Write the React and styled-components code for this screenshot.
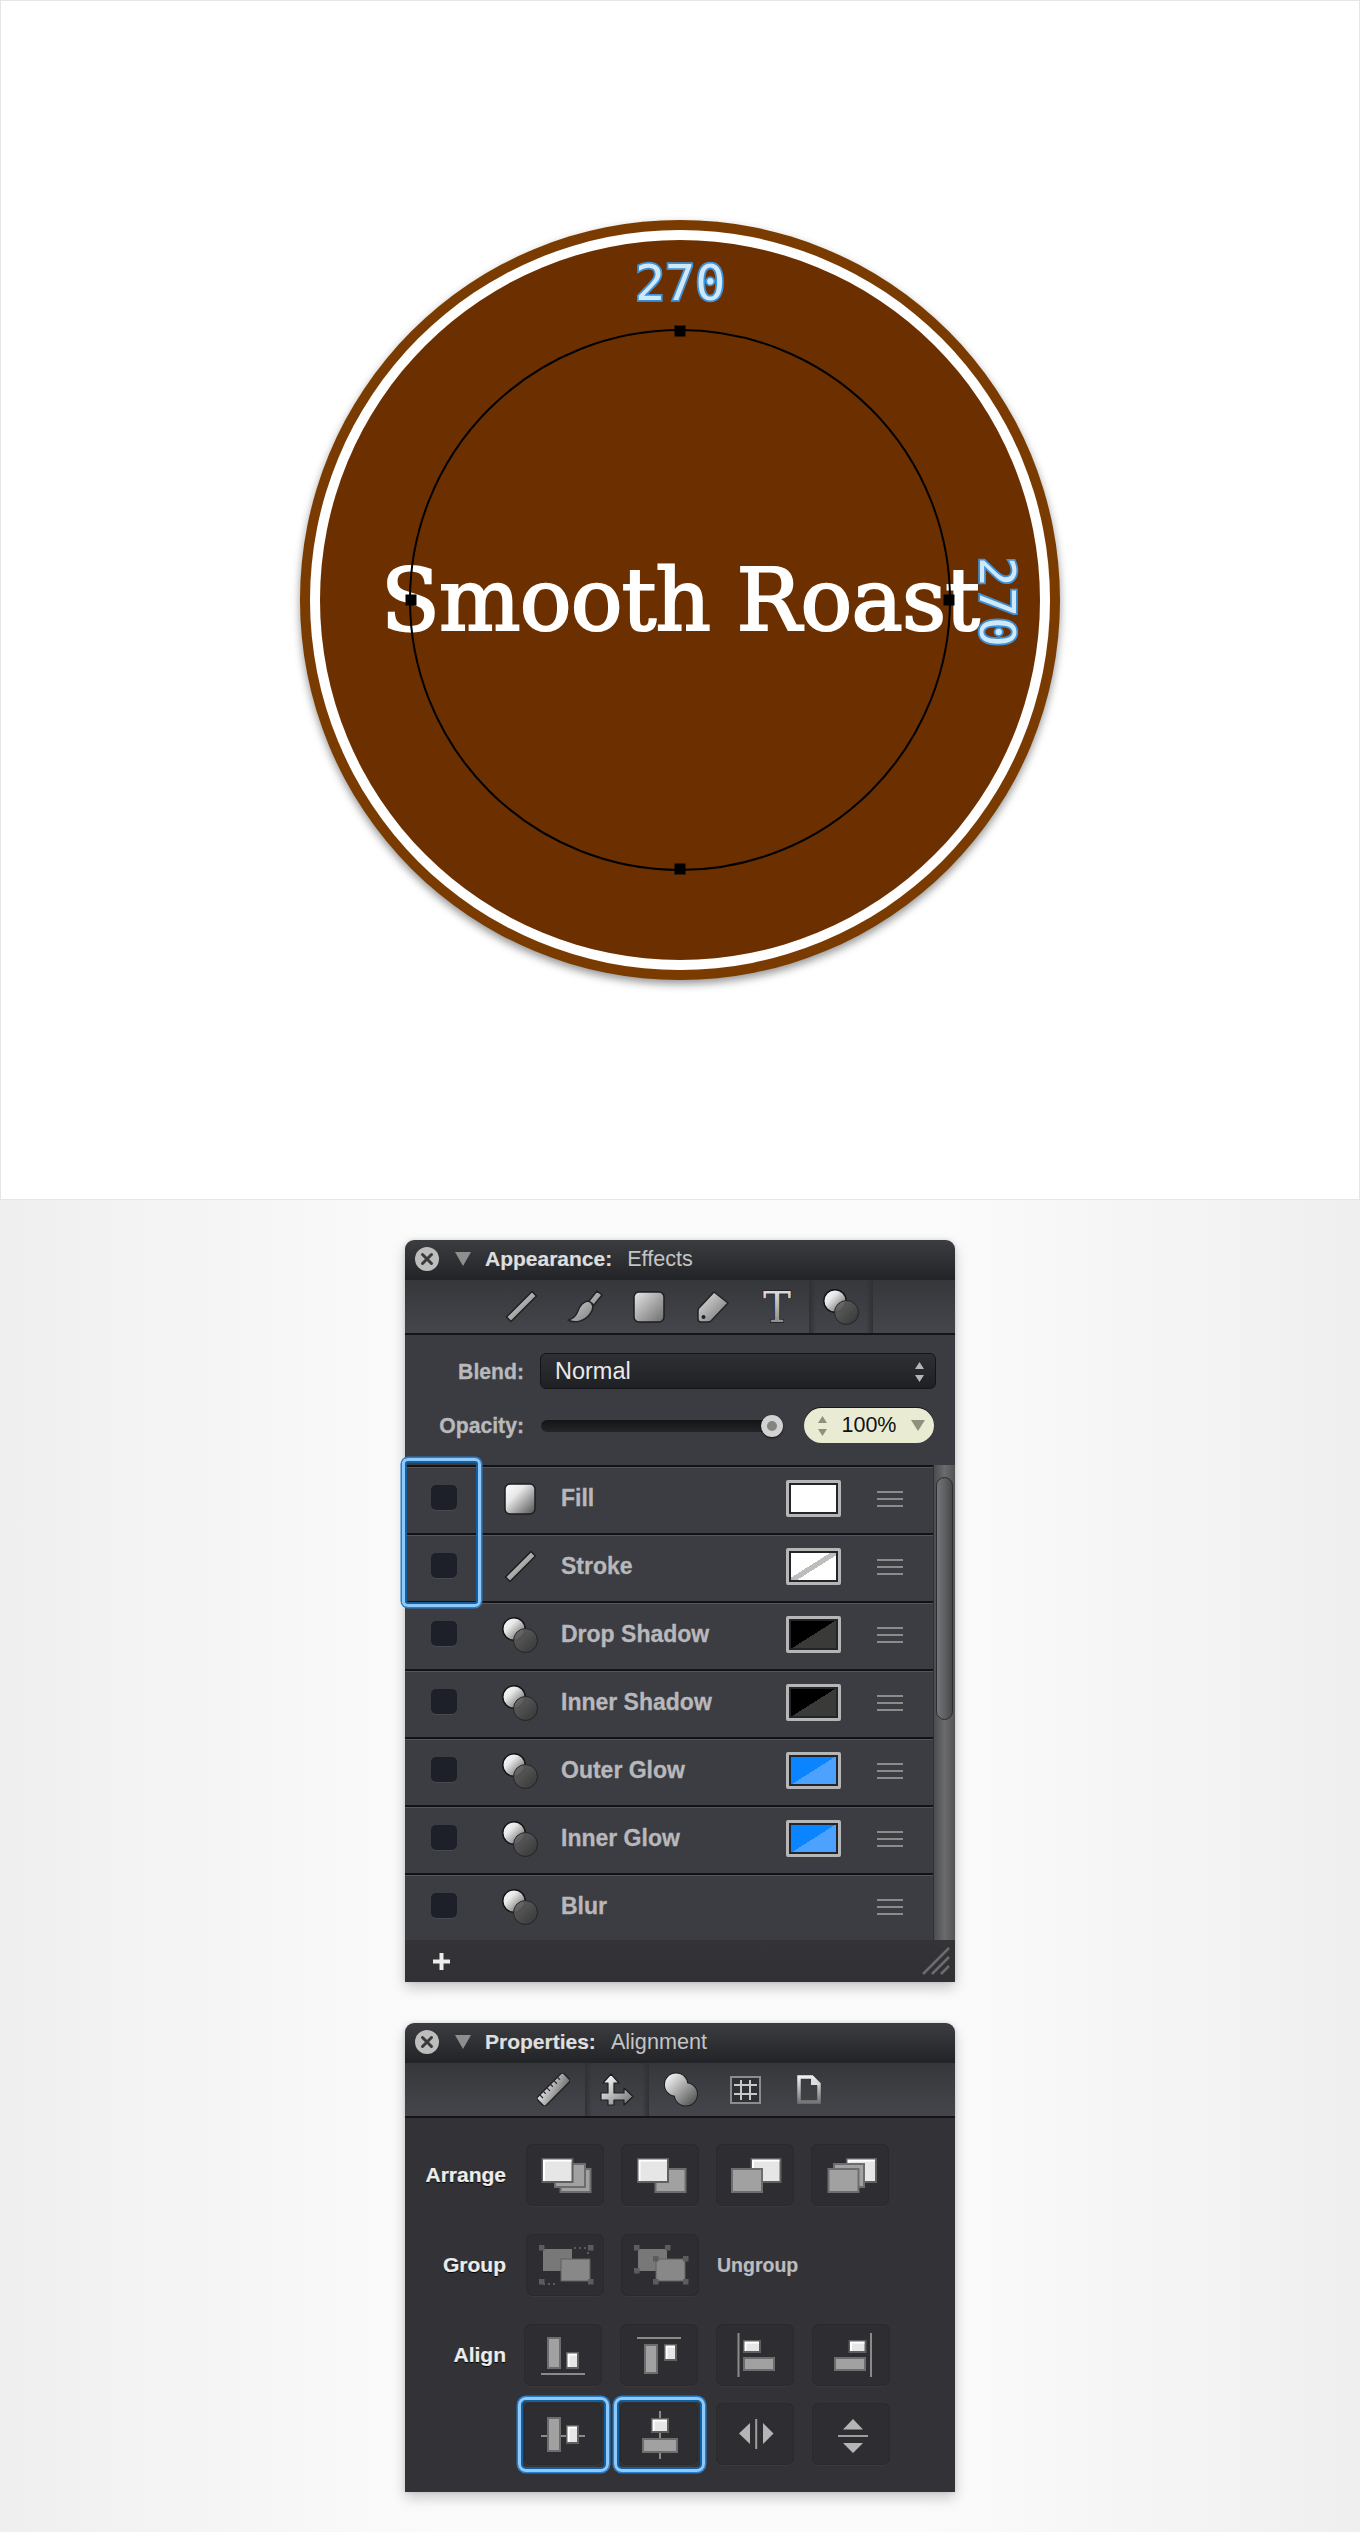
import React from 'react'
import styled, { createGlobalStyle } from 'styled-components'

const GlobalStyle = createGlobalStyle`
  html, body {
    margin: 0;
    padding: 0;
    background: #f4f4f4;
  }
  body {
    font-family: "Liberation Sans", Arial, sans-serif;
  }
`

const Page = styled.div`
  width: 1360px;
  height: 2532px;
  overflow: hidden;
`

/* ---------- artboard with the badge ---------- */

const Artboard = styled.section`
  box-sizing: border-box;
  height: 1200px;
  background: #fff;
  border: 1px solid #e6e6e6;
  display: flex;
  align-items: center;
  justify-content: center;
`

const BadgeOuter = styled.div`
  width: 760px;
  height: 760px;
  border-radius: 50%;
  background: #7a3b00;
  box-shadow: 0 4px 8px rgba(0, 0, 0, 0.42);
  display: flex;
  align-items: center;
  justify-content: center;
`

const BadgeRing = styled.div`
  width: 740px;
  height: 740px;
  border-radius: 50%;
  background: #fff;
  display: flex;
  align-items: center;
  justify-content: center;
`

const BadgeInner = styled.div`
  position: relative;
  width: 720px;
  height: 720px;
  border-radius: 50%;
  background: #6c3000;
  display: flex;
  align-items: center;
  justify-content: center;
`

const BadgeTitle = styled.div`
  font-family: "DejaVu Serif", "Liberation Serif", serif;
  font-size: 86px;
  line-height: 1;
  letter-spacing: -0.8px;
  color: #fff;
  white-space: nowrap;
  -webkit-text-stroke: 2.2px #fff;
`

const Guide = styled.div`
  position: absolute;
  box-sizing: border-box;
  left: 89px;
  top: 89px;
  width: 542px;
  height: 542px;
  border: 2px solid #000;
  border-radius: 50%;
`

const handlePlace = {
  top: 'left: 50%; top: 0;',
  bottom: 'left: 50%; top: 100%;',
  left: 'left: 0; top: 50%;',
  right: 'left: 100%; top: 50%;',
}

const Handle = styled.i`
  position: absolute;
  width: 11px;
  height: 11px;
  background: #000;
  transform: translate(-50%, -50%);
  ${(p) => handlePlace[p.$side]}
`

const PathLabel = styled.span`
  position: absolute;
  font-family: "DejaVu Sans Mono", "Liberation Mono", monospace;
  font-size: 50px;
  line-height: 56px;
  color: #cfe9fc;
  -webkit-text-stroke: 3.5px #3f94dc;
  paint-order: stroke fill;
  text-shadow: 0 0 1px #1f6ab0;
`

const TopLabel = styled(PathLabel)`
  left: 315px;
  top: 15px;
`

const SideLabel = styled(PathLabel)`
  left: 632px;
  top: 334px;
  transform: rotate(90deg);
`

/* ---------- workspace with the panels ---------- */

const Workspace = styled.section`
  height: 1332px;
  padding-top: 40px;
  box-sizing: border-box;
  background: linear-gradient(90deg, #efefef 0%, #fbfbfb 32%, #fbfbfb 68%, #efefef 100%);
  display: flex;
  flex-direction: column;
  align-items: center;
  gap: 41px;
`

const Panel = styled.div`
  position: relative;
  width: 550px;
  border-radius: 9px 9px 0 0;
  box-shadow: 0 6px 14px rgba(0, 0, 0, 0.2), 0 0 4px rgba(0, 0, 0, 0.12);
`

const TitleBar = styled.header`
  height: 40px;
  box-sizing: border-box;
  padding: 0 0 2px 10px;
  border-radius: 9px 9px 0 0;
  background: linear-gradient(#3c3d41, #222326);
  display: flex;
  align-items: center;
  font-size: 21.6px;
  color: #c4c4c4;
`

const CloseIcon = styled.svg`
  width: 24px;
  height: 24px;
  margin-right: 16px;
`

const Disclosure = styled.i`
  width: 0;
  height: 0;
  margin-right: 14px;
  border-left: 8.5px solid transparent;
  border-right: 8.5px solid transparent;
  border-top: 14px solid #8e8e8e;
`

const PanelName = styled.strong`
  font-size: 21px;
  color: #dedede;
  margin-right: 15px;
  -webkit-text-stroke: 0.2px #dedede;
`

const Toolbar = styled.nav`
  height: 55px;
  box-sizing: border-box;
  padding-left: 2px;
  border-bottom: 2px solid #141517;
  background: linear-gradient(#36373b, #45464b);
  display: flex;
  justify-content: center;
`

const Tab = styled.div`
  width: 64px;
  display: flex;
  align-items: center;
  justify-content: center;
  ${(p) =>
    p.$active &&
    `background: linear-gradient(90deg, #303134 0, rgba(60, 61, 66, 0.2) 7px, rgba(60, 61, 66, 0.2) 57px, #303134 64px);`}
`

const EffectsForm = styled.div`
  background: #3b3c41;
  padding: 18px 19px 22px 0;
  display: flex;
  flex-direction: column;
  gap: 19px;
`

const FormRow = styled.div`
  display: flex;
  align-items: center;
  gap: 16px;
`

const FormLabel = styled.label`
  width: 119px;
  padding-top: 1px;
  text-align: right;
  font-size: 21.2px;
  font-weight: bold;
  color: #b9b9bb;
  -webkit-text-stroke: 0.3px #b9b9bb;
`

const Select = styled.div`
  flex: 1;
  height: 36px;
  box-sizing: border-box;
  padding: 1px 11px 0 14px;
  border: 1px solid #131417;
  border-radius: 6px;
  background: linear-gradient(#2f3034, #1f2023);
  display: flex;
  align-items: center;
  justify-content: space-between;
  font-size: 23.5px;
  color: #e9e9e9;
`

const Stepper = styled.svg`
  width: 9px;
  height: 20px;
`

const OpacityControls = styled.div`
  flex: 1;
  display: flex;
  align-items: center;
  gap: 21px;
  margin-right: 2px;
`

const SliderTrack = styled.div`
  position: relative;
  width: 242px;
  height: 12px;
  margin-left: 1px;
  border-radius: 6px;
  background: linear-gradient(#131416, #242528);
`

const SliderKnob = styled.i`
  position: absolute;
  right: 0;
  top: -5px;
  width: 22px;
  height: 22px;
  box-sizing: border-box;
  border: 6px solid #d2d2d2;
  border-radius: 50%;
  background: #85857f;
  box-shadow: 0 1px 2px rgba(0, 0, 0, 0.7);
`

const OpacityField = styled.div`
  width: 130px;
  height: 35px;
  box-sizing: border-box;
  padding: 0 9px 0 14px;
  border-radius: 18px;
  background: #e9ecd3;
  box-shadow: 0 -1px 0 #17181a;
  display: flex;
  align-items: center;
  justify-content: space-between;
  font-size: 21.5px;
  color: #111;
`

const LayerArea = styled.div`
  height: 475px;
  display: flex;
  overflow: hidden;
  background: #3c3d42;
`

const LayerList = styled.ul`
  list-style: none;
  margin: 0;
  padding: 0;
  width: 528px;
`

const LayerRow = styled.li`
  height: 68px;
  box-sizing: border-box;
  border-top: 2px solid #121315;
  box-shadow: inset 0 1px 0 #54555a;
  padding: 0 0 3px 26px;
  display: flex;
  align-items: center;
`

const Checkbox = styled.i`
  width: 26px;
  height: 25px;
  margin: -2px 45px 0 0;
  border-radius: 5px;
  background: #1d2029;
  box-shadow: 0 1px 0 #494a4f;
`

const LayerIconBox = styled.div`
  width: 36px;
  height: 36px;
  margin-right: 23px;
  display: flex;
  align-items: center;
  justify-content: center;
`

const LayerName = styled.span`
  flex: 1;
  font-size: 23px;
  font-weight: bold;
  color: #b8b8bc;
  -webkit-text-stroke: 0.3px #b8b8bc;
`

const Swatch = styled.i`
  width: 55px;
  height: 37px;
  box-sizing: border-box;
  border: 3px solid #b6b6b6;
  border-radius: 2px;
  background: ${(p) => p.$fill};
  box-shadow: inset 0 0 0 2px #24252a;
  margin-right: 36px;
`

const GripLines = styled.i`
  width: 26px;
  height: 16px;
  margin-right: 30px;
  background: repeating-linear-gradient(#8b8b8b 0, #8b8b8b 2px, transparent 2px, transparent 7px);
`

const Scrollbar = styled.div`
  width: 22px;
  background: linear-gradient(90deg, #4b4c4f, #6b6b6c 50%, #525356);
  border-left: 1px solid #2e2f32;
  box-sizing: border-box;
  padding: 12px 2px 0 2px;
`

const ScrollThumb = styled.div`
  height: 241px;
  border-radius: 9px;
  border: 1px solid #2b2c2f;
  background: linear-gradient(90deg, #74757a, #5b5c5e 60%, #47484a);
`

const SelectionBox = styled.div`
  position: absolute;
  left: -3px;
  top: 218px;
  width: 79px;
  height: 149px;
  box-sizing: border-box;
  border: 3px solid #8dc9fa;
  border-radius: 6px;
  box-shadow: 0 0 0 1.5px #2a7cc9, inset 0 0 0 2px #14609f;
  pointer-events: none;
`

const PanelFooter = styled.footer`
  height: 42px;
  box-sizing: border-box;
  padding: 0 5px 0 28px;
  background: linear-gradient(#343438, #313135);
  display: flex;
  align-items: center;
  justify-content: space-between;
`

const PropertiesBody = styled.div`
  background: #333337;
  padding: 26px 0 27px 0;
  display: flex;
  flex-direction: column;
`

const ButtonRow = styled.div`
  display: flex;
  align-items: center;
  margin-top: ${(p) => p.$top || 0}px;
`

const RowLabel = styled.span`
  width: 101px;
  text-align: right;
  margin-right: ${(p) => p.$gap}px;
  font-size: 21px;
  font-weight: bold;
  color: #ececec;
  text-shadow: 0 1px 1px #000;
  -webkit-text-stroke: 0.2px #ececec;
`

const ButtonGroup = styled.div`
  display: flex;
  gap: ${(p) => p.$gap}px;
`

const IconButton = styled.div`
  position: relative;
  width: 78px;
  height: 62px;
  border-radius: 7px;
  background: #2e2e32;
  box-shadow: inset 0 0 0 1px #2a2a2d, 0 1px 0 #3a3a3e;
  ${(p) =>
    p.$selected &&
    `&::after {
      content: '';
      position: absolute;
      inset: -6px -7px -7px -6px;
      border: 3.5px solid #8dc9fa;
      border-radius: 8px;
      box-shadow: 0 0 0 1.5px #2a7cc9, inset 0 0 0 2px #14609f;
    }`}
`

const UngroupText = styled.span`
  margin-left: 18px;
  font-size: 19.5px;
  font-weight: bold;
  color: #bcbcc0;
  -webkit-text-stroke: 0.2px #bcbcc0;
`

const DefsHolder = styled.svg`
  display: block;
  width: 0;
  height: 0;
`

/* ---------- drawings ---------- */

const Defs = () => (
  <DefsHolder>
    <defs>
      <linearGradient id="metal" x1="0" y1="0" x2="1" y2="1">
        <stop offset="0" stopColor="#e6e6e6" />
        <stop offset="1" stopColor="#6d6d6d" />
      </linearGradient>
      <linearGradient id="gloss" x1="0" y1="0" x2="1" y2="1">
        <stop offset="0" stopColor="#ffffff" />
        <stop offset="0.35" stopColor="#e8e8e8" />
        <stop offset="1" stopColor="#4e4e4e" />
      </linearGradient>
      <linearGradient id="vert" x1="0" y1="0" x2="0" y2="1">
        <stop offset="0" stopColor="#efefef" />
        <stop offset="1" stopColor="#777" />
      </linearGradient>
      <linearGradient id="blob" gradientUnits="userSpaceOnUse" x1="4" y1="4" x2="32" y2="32">
        <stop offset="0" stopColor="#f4f4f4" />
        <stop offset="1" stopColor="#555" />
      </linearGradient>
      <linearGradient id="arrows" gradientUnits="userSpaceOnUse" x1="5" y1="2" x2="30" y2="30">
        <stop offset="0" stopColor="#fff" />
        <stop offset="1" stopColor="#777" />
      </linearGradient>
      <linearGradient id="smoke" x1="0" y1="0" x2="1" y2="1">
        <stop offset="0" stopColor="#6a6a6a" stopOpacity="0.85" />
        <stop offset="1" stopColor="#333" stopOpacity="0.95" />
      </linearGradient>
    </defs>
  </DefsHolder>
)

const Close = () => (
  <CloseIcon viewBox="0 0 24 24">
    <circle cx="12" cy="12" r="12" fill="#bdbdbd" />
    <path d="M7.5 7.5l9 9M16.5 7.5l-9 9" stroke="#3a3a3c" strokeWidth="3" strokeLinecap="round" />
  </CloseIcon>
)

const UpDown = ({ color = '#b5b5b5' }) => (
  <Stepper viewBox="0 0 9 20">
    <path d="M4.5 0L9 7H0z M0 13h9L4.5 20z" fill={color} />
  </Stepper>
)

const LineIcon = () => (
  <svg width="33" height="33" viewBox="0 0 33 33">
    <path d="M1.5 27L27 1.5l4.5 4.5L6 31.5z" fill="url(#metal)" stroke="#1d1e21" strokeWidth="1.5" strokeLinejoin="round" />
  </svg>
)

const BrushIcon = () => (
  <svg width="36" height="33" viewBox="0 0 36 33">
    <path
      d="M30 1l5 4-8 10-5-4zM21 11c6 2 6 8 2 13-5 7-15 10-22 6 5-1 8-4 10-9 2-6 5-9 10-10z"
      fill="url(#metal)"
      stroke="#222327"
      strokeWidth="1.5"
      strokeLinejoin="round"
    />
  </svg>
)

const FillIcon = ({ size = 32, gradient = 'metal' }) => (
  <svg width={size} height={size} viewBox="0 0 32 32">
    <rect x="1" y="1" width="30" height="30" rx="5" fill={`url(#${gradient})`} stroke="#1d1e21" strokeWidth="1.5" />
  </svg>
)

const TagIcon = () => (
  <svg width="32" height="32" viewBox="0 0 32 32">
    <path
      d="M17 1l14 11-17 18q-1 1-3 1H4q-3 0-3-3v-8q0-2 1-3z"
      fill="url(#metal)"
      stroke="#222327"
      strokeWidth="1.5"
      strokeLinejoin="round"
    />
    <circle cx="6.5" cy="26" r="2" fill="#222327" />
  </svg>
)

const TextIcon = () => (
  <svg width="34" height="50" viewBox="0 0 34 50">
    <text
      x="17"
      y="40"
      textAnchor="middle"
      fontFamily='"DejaVu Serif", serif'
      fontSize="42"
      fill="url(#vert)"
      stroke="#1d1e21"
      strokeWidth="1.4"
      paintOrder="stroke"
    >
      T
    </text>
  </svg>
)

const EffectIcon = () => (
  <svg width="36" height="36" viewBox="0 0 36 36">
    <circle cx="12" cy="12" r="11.2" fill="url(#gloss)" stroke="#121315" strokeWidth="1.4" />
    <circle cx="23.5" cy="23.5" r="12" fill="url(#smoke)" stroke="#1f2022" strokeWidth="0.9" />
  </svg>
)

const RulerIcon = () => (
  <svg width="33" height="33" viewBox="0 0 33 33">
    <g transform="rotate(-45 16.5 16.5)">
      <rect x="-2" y="10.5" width="37" height="12" rx="2" fill="url(#metal)" stroke="#222327" strokeWidth="1.5" />
      <path d="M3 11v4M8 11v3M13 11v4M18 11v3M23 11v4M28 11v3" stroke="#2a2b2e" strokeWidth="1.3" />
    </g>
  </svg>
)

const MoveIcon = () => (
  <svg width="34" height="33" viewBox="0 0 34 33">
    <path
      d="M11 1l8 9h-5v10h10v-5l9 8.5-9 8.5v-5H14v5H8v-5H1v-7h7V10H3z"
      fill="url(#arrows)"
      stroke="#1d1e21"
      strokeWidth="1.2"
      strokeLinejoin="round"
    />
  </svg>
)

const BlobIcon = () => (
  <svg width="36" height="35" viewBox="0 0 36 36">
    <circle cx="13" cy="13" r="12.5" fill="#1d1e21" />
    <circle cx="23" cy="23" r="12.5" fill="#1d1e21" />
    <circle cx="13" cy="13" r="11.5" fill="url(#blob)" />
    <circle cx="23" cy="23" r="11.5" fill="url(#blob)" />
  </svg>
)

const GridIcon = () => (
  <svg width="31" height="28" viewBox="0 0 31 28">
    <rect x="1" y="1" width="29" height="26" fill="#2f3034" stroke="#8c8c8c" strokeWidth="2" />
    <path d="M4 9h23M4 18h23M11 4v20M20 4v20" stroke="#c8c8c8" strokeWidth="2" />
  </svg>
)

const PageIcon = () => (
  <svg width="24" height="29" viewBox="0 0 24 29">
    <path d="M2 2h13l7 7v18H2z" fill="none" stroke="url(#vert)" strokeWidth="3.5" strokeLinejoin="miter" />
    <path d="M14 2v8h8z" fill="#ddd" />
  </svg>
)

const Plus = () => (
  <svg width="17" height="17" viewBox="0 0 17 17">
    <path d="M6.5 0h4v6.5H17v4h-6.5V17h-4v-6.5H0v-4h6.5z" fill="#ececec" />
  </svg>
)

const ResizeGrip = () => (
  <svg width="28" height="28" viewBox="0 0 28 28">
    <path d="M1 27L27 1M10 27L27 10M19 27l8-8" stroke="#6c6c6f" strokeWidth="2.5" />
  </svg>
)

const Light = ({ x, y, w, h }) => (
  <g>
    <rect x={x + 1} y={y + 1} width={w - 2} height={h - 2} fill="#e6e6e6" stroke="#5f5f5f" strokeWidth="2" />
    <path d={`M${x + 2.5} ${y + h - 2}V${y + 2.5}H${x + w - 2}`} fill="none" stroke="#fff" strokeWidth="2" />
  </g>
)

const Dark = ({ x, y, w, h }) => (
  <rect x={x + 1} y={y + 1} width={w - 2} height={h - 2} fill="#a1a1a1" stroke="#6d6d6d" strokeWidth="2" />
)

const Knot = ({ x, y }) => <rect x={x} y={y} width="5.5" height="5.5" fill="#5c5c5c" />

const Art = ({ children }) => (
  <svg width="78" height="62" viewBox="0 0 78 62">
    {children}
  </svg>
)

const RULE = '#8a8a8a'

const arrangeArt = [
  <Art key="a">
    <Dark x={33.5} y={24} w={32} h={25} />
    <Dark x={28} y={19} w={32} h={25} />
    <Light x={15.5} y={14} w={32} h={25} />
  </Art>,
  <Art key="b">
    <Dark x={33.5} y={24} w={32} h={25} />
    <Light x={16} y={14} w={32} h={25} />
  </Art>,
  <Art key="c">
    <Light x={34.5} y={14} w={31} h={25} />
    <Dark x={15} y={24} w={32} h={25} />
  </Art>,
  <Art key="d">
    <Light x={35} y={14} w={31} h={25} />
    <Dark x={22} y={19} w={32} h={25} />
    <Dark x={16.5} y={24} w={32} h={25} />
  </Art>,
]

const alignTop = [
  <Art key="a">
    <Dark x={23} y={13} w={14} h={32} />
    <Light x={42} y={28} w={13} h={17} />
    <rect x="17" y="49" width="44" height="2" fill={RULE} />
  </Art>,
  <Art key="b">
    <rect x="17" y="13" width="44" height="2" fill={RULE} />
    <Dark x={24} y={20} w={14} h={30} />
    <Light x={44} y={20} w={13} h={17} />
  </Art>,
  <Art key="c">
    <rect x="21.5" y="9" width="2" height="44" fill={RULE} />
    <Light x={27} y={16} w={18} h={13} />
    <Dark x={27} y={33} w={32} h={14} />
  </Art>,
  <Art key="d">
    <rect x="58" y="9" width="2" height="44" fill={RULE} />
    <Light x={36.5} y={16} w={18} h={13} />
    <Dark x={22} y={33} w={32} h={14} />
  </Art>,
]

const alignBottom = [
  <Art key="a">
    <rect x="17" y="32" width="44" height="2" fill={RULE} />
    <Dark x={23} y={14} w={14} h={35} />
    <Light x={42} y={22} w={13} h={19} />
  </Art>,
  <Art key="b">
    <rect x="39" y="8" width="2" height="48" fill={RULE} />
    <Light x={31} y={15} w={18} h={15} />
    <Dark x={22} y={35} w={36} h={15} />
  </Art>,
  <Art key="c">
    <rect x="39.2" y="16" width="2" height="30" fill="#9d9d9d" />
    <path d="M34 20v21L23 30.5zM47 20v21l10.5-10.5z" fill="#b5b5b5" />
  </Art>,
  <Art key="d">
    <rect x="26" y="32" width="30" height="2" fill="#9d9d9d" />
    <path d="M41 16l10 10.5H31zM31 40h20L41 50z" fill="#b5b5b5" />
  </Art>,
]

const groupArt = (
  <Art>
    <rect x="17" y="15" width="29" height="22" fill="#787878" />
    <rect x="35" y="25" width="29" height="22" fill="#888" stroke="#5f5f5f" />
    <path d="M48 14h12M62 18v5M17 50h12" stroke="#6a6a6a" strokeWidth="1.5" strokeDasharray="2 3" fill="none" />
    <Knot x={13} y={11} />
    <Knot x={62} y={11} />
    <Knot x={13} y={45} />
    <Knot x={62} y={45} />
  </Art>
)

const ungroupArt = (
  <Art>
    <rect x="17" y="15" width="29" height="22" fill="#787878" />
    <rect x="35" y="25" width="29" height="22" fill="#888" stroke="#5f5f5f" />
    <Knot x={13} y={11} />
    <Knot x={44} y={11} />
    <Knot x={13} y={34} />
    <Knot x={32} y={22} />
    <Knot x={62} y={22} />
    <Knot x={32} y={45} />
    <Knot x={62} y={45} />
  </Art>
)

const layers = [
  { name: 'Fill', icon: 'fill', swatch: '#fff' },
  {
    name: 'Stroke',
    icon: 'line',
    swatch: 'linear-gradient(to bottom right, #fff 45%, #bdbdbd 45%, #bdbdbd 55%, #fff 55%)',
  },
  { name: 'Drop Shadow', swatch: 'linear-gradient(to bottom right, #000 50%, #3a3a38 50%)' },
  { name: 'Inner Shadow', swatch: 'linear-gradient(to bottom right, #000 50%, #3a3a38 50%)' },
  { name: 'Outer Glow', swatch: 'linear-gradient(to bottom right, #0a84ff 50%, #4ea2ff 50%)' },
  { name: 'Inner Glow', swatch: 'linear-gradient(to bottom right, #0a84ff 50%, #4ea2ff 50%)' },
  { name: 'Blur' },
]

const LayerIcon = ({ type }) => {
  if (type === 'fill') return <FillIcon gradient="gloss" />
  if (type === 'line') return <LineIcon />
  return <EffectIcon />
}

const AppearancePanel = () => (
  <Panel>
    <TitleBar>
      <Close />
      <Disclosure />
      <PanelName>Appearance:</PanelName>
      <span>Effects</span>
    </TitleBar>
    <Toolbar>
      <Tab><LineIcon /></Tab>
      <Tab><BrushIcon /></Tab>
      <Tab><FillIcon /></Tab>
      <Tab><TagIcon /></Tab>
      <Tab><TextIcon /></Tab>
      <Tab $active><EffectIcon /></Tab>
    </Toolbar>
    <EffectsForm>
      <FormRow>
        <FormLabel>Blend:</FormLabel>
        <Select>
          Normal
          <UpDown />
        </Select>
      </FormRow>
      <FormRow>
        <FormLabel>Opacity:</FormLabel>
        <OpacityControls>
          <SliderTrack>
            <SliderKnob />
          </SliderTrack>
          <OpacityField>
            <UpDown color="#8f917f" />
            <span>100%</span>
            <svg width="14" height="11" viewBox="0 0 14 11">
              <path d="M0 0h14L7 11z" fill="#8f917f" />
            </svg>
          </OpacityField>
        </OpacityControls>
      </FormRow>
    </EffectsForm>
    <LayerArea>
      <LayerList>
        {layers.map((layer) => (
          <LayerRow key={layer.name}>
            <Checkbox />
            <LayerIconBox>
              <LayerIcon type={layer.icon} />
            </LayerIconBox>
            <LayerName>{layer.name}</LayerName>
            {layer.swatch && <Swatch $fill={layer.swatch} />}
            <GripLines />
          </LayerRow>
        ))}
      </LayerList>
      <Scrollbar>
        <ScrollThumb />
      </Scrollbar>
    </LayerArea>
    <PanelFooter>
      <Plus />
      <ResizeGrip />
    </PanelFooter>
    <SelectionBox />
  </Panel>
)

const PropertiesPanel = () => (
  <Panel>
    <TitleBar>
      <Close />
      <Disclosure />
      <PanelName>Properties:</PanelName>
      <span>Alignment</span>
    </TitleBar>
    <Toolbar>
      <Tab><RulerIcon /></Tab>
      <Tab $active><MoveIcon /></Tab>
      <Tab><BlobIcon /></Tab>
      <Tab><GridIcon /></Tab>
      <Tab><PageIcon /></Tab>
    </Toolbar>
    <PropertiesBody>
      <ButtonRow>
        <RowLabel $gap={20}>Arrange</RowLabel>
        <ButtonGroup $gap={17}>
          {arrangeArt.map((art) => (
            <IconButton key={art.key}>{art}</IconButton>
          ))}
        </ButtonGroup>
      </ButtonRow>
      <ButtonRow $top={28}>
        <RowLabel $gap={20}>Group</RowLabel>
        <ButtonGroup $gap={17}>
          <IconButton>{groupArt}</IconButton>
          <IconButton>{ungroupArt}</IconButton>
        </ButtonGroup>
        <UngroupText>Ungroup</UngroupText>
      </ButtonRow>
      <ButtonRow $top={28}>
        <RowLabel $gap={18}>Align</RowLabel>
        <ButtonGroup $gap={18}>
          {alignTop.map((art) => (
            <IconButton key={art.key}>{art}</IconButton>
          ))}
        </ButtonGroup>
      </ButtonRow>
      <ButtonRow $top={17}>
        <RowLabel $gap={18} />
        <ButtonGroup $gap={18}>
          {alignBottom.map((art, i) => (
            <IconButton key={art.key} $selected={i < 2}>
              {art}
            </IconButton>
          ))}
        </ButtonGroup>
      </ButtonRow>
    </PropertiesBody>
  </Panel>
)

export default function App() {
  return (
    <Page>
      <GlobalStyle />
      <Defs />
      <Artboard>
        <BadgeOuter>
          <BadgeRing>
            <BadgeInner>
              <BadgeTitle>Smooth Roast</BadgeTitle>
              <TopLabel>270</TopLabel>
              <SideLabel>270</SideLabel>
              <Guide>
                <Handle $side="top" />
                <Handle $side="bottom" />
                <Handle $side="left" />
                <Handle $side="right" />
              </Guide>
            </BadgeInner>
          </BadgeRing>
        </BadgeOuter>
      </Artboard>
      <Workspace>
        <AppearancePanel />
        <PropertiesPanel />
      </Workspace>
    </Page>
  )
}
